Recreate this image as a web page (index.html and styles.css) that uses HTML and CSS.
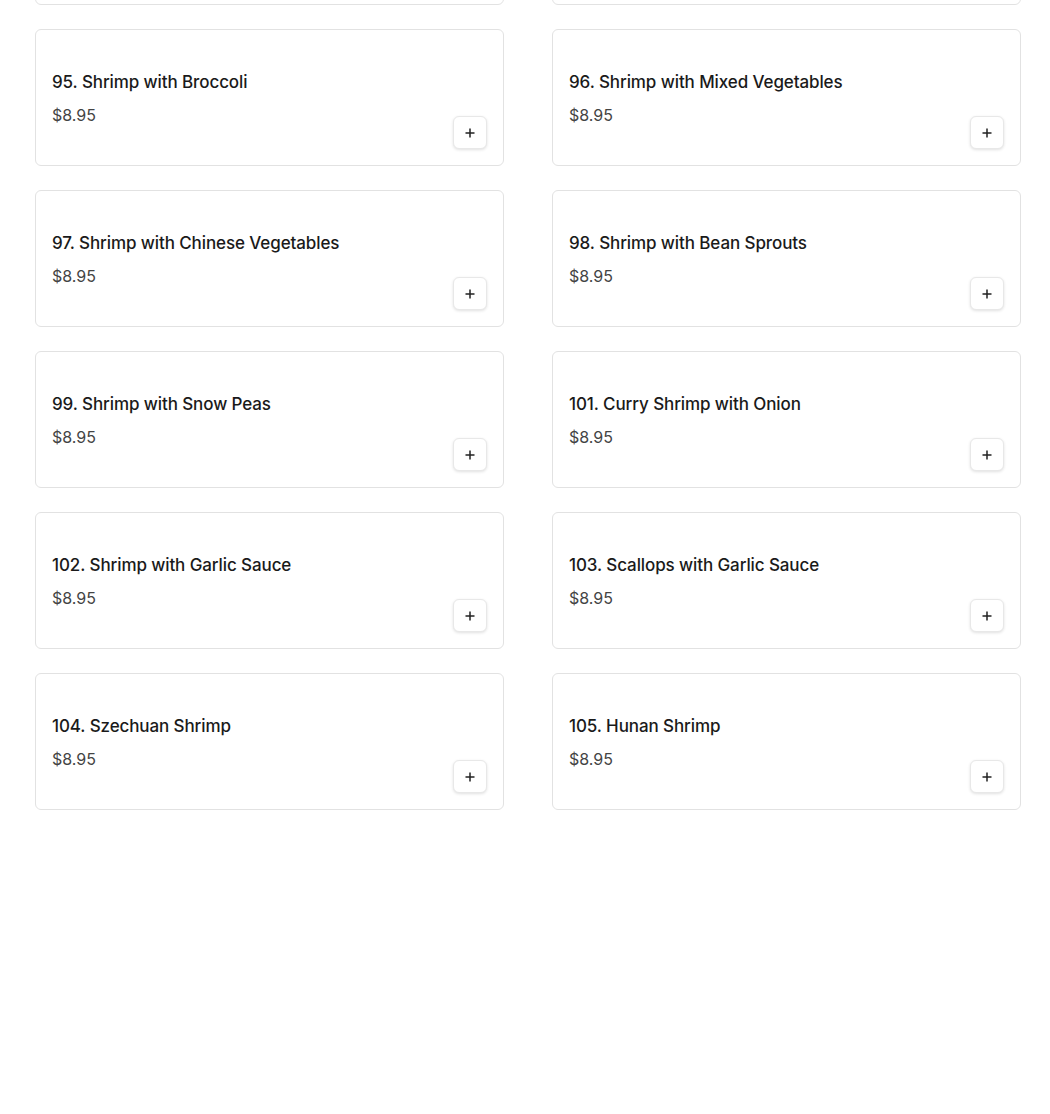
FILE: index.html
```html
<!DOCTYPE html>
<html>

<head>
    <title>Shrimp Menu</title>
    <link rel="stylesheet" href="styles.css">
</head>

<body>
    <div class="menu-grid">
        <!-- previous row, scrolled out of view -->
        <div class="item-card"></div>
        <div class="item-card"></div>

        <div class="item-card">
            <div class="item-info">
                <p class="item-name">95. Shrimp with Broccoli</p>
                <p class="item-price">$8.95</p>
            </div>
            <button class="add-btn" type="button"><svg width="10" height="10" viewBox="0 0 10 10"><path d="M5 0.5v9M0.5 5h9" stroke="#222" stroke-width="1.5" /></svg></button>
        </div>
        <div class="item-card">
            <div class="item-info">
                <p class="item-name">96. Shrimp with Mixed Vegetables</p>
                <p class="item-price">$8.95</p>
            </div>
            <button class="add-btn" type="button"><svg width="10" height="10" viewBox="0 0 10 10"><path d="M5 0.5v9M0.5 5h9" stroke="#222" stroke-width="1.5" /></svg></button>
        </div>
        <div class="item-card">
            <div class="item-info">
                <p class="item-name">97. Shrimp with Chinese Vegetables</p>
                <p class="item-price">$8.95</p>
            </div>
            <button class="add-btn" type="button"><svg width="10" height="10" viewBox="0 0 10 10"><path d="M5 0.5v9M0.5 5h9" stroke="#222" stroke-width="1.5" /></svg></button>
        </div>
        <div class="item-card">
            <div class="item-info">
                <p class="item-name">98. Shrimp with Bean Sprouts</p>
                <p class="item-price">$8.95</p>
            </div>
            <button class="add-btn" type="button"><svg width="10" height="10" viewBox="0 0 10 10"><path d="M5 0.5v9M0.5 5h9" stroke="#222" stroke-width="1.5" /></svg></button>
        </div>
        <div class="item-card">
            <div class="item-info">
                <p class="item-name">99. Shrimp with Snow Peas</p>
                <p class="item-price">$8.95</p>
            </div>
            <button class="add-btn" type="button"><svg width="10" height="10" viewBox="0 0 10 10"><path d="M5 0.5v9M0.5 5h9" stroke="#222" stroke-width="1.5" /></svg></button>
        </div>
        <div class="item-card">
            <div class="item-info">
                <p class="item-name">101. Curry Shrimp with Onion</p>
                <p class="item-price">$8.95</p>
            </div>
            <button class="add-btn" type="button"><svg width="10" height="10" viewBox="0 0 10 10"><path d="M5 0.5v9M0.5 5h9" stroke="#222" stroke-width="1.5" /></svg></button>
        </div>
        <div class="item-card">
            <div class="item-info">
                <p class="item-name">102. Shrimp with Garlic Sauce</p>
                <p class="item-price">$8.95</p>
            </div>
            <button class="add-btn" type="button"><svg width="10" height="10" viewBox="0 0 10 10"><path d="M5 0.5v9M0.5 5h9" stroke="#222" stroke-width="1.5" /></svg></button>
        </div>
        <div class="item-card">
            <div class="item-info">
                <p class="item-name">103. Scallops with Garlic Sauce</p>
                <p class="item-price">$8.95</p>
            </div>
            <button class="add-btn" type="button"><svg width="10" height="10" viewBox="0 0 10 10"><path d="M5 0.5v9M0.5 5h9" stroke="#222" stroke-width="1.5" /></svg></button>
        </div>
        <div class="item-card">
            <div class="item-info">
                <p class="item-name">104. Szechuan Shrimp</p>
                <p class="item-price">$8.95</p>
            </div>
            <button class="add-btn" type="button"><svg width="10" height="10" viewBox="0 0 10 10"><path d="M5 0.5v9M0.5 5h9" stroke="#222" stroke-width="1.5" /></svg></button>
        </div>
        <div class="item-card">
            <div class="item-info">
                <p class="item-name">105. Hunan Shrimp</p>
                <p class="item-price">$8.95</p>
            </div>
            <button class="add-btn" type="button"><svg width="10" height="10" viewBox="0 0 10 10"><path d="M5 0.5v9M0.5 5h9" stroke="#222" stroke-width="1.5" /></svg></button>
        </div>
    </div>
</body>

</html>
```

FILE: styles.css
```css
/* Menu list styles */
body {
    margin: 0;
    background-color: #fff;
    font-family: Inter, "Noto Sans", sans-serif;
    color: #1a1a1a;
}

.menu-grid {
    display: grid;
    grid-template-columns: 469px 469px;
    column-gap: 48px;
    row-gap: 24px;
    padding: 0 29px 0 35px;
    margin-top: -132px;
}

.item-card {
    box-sizing: border-box;
    height: 137px;
    border: 1px solid #e2e2e2;
    border-radius: 6px;
    padding: 16px;
    display: flex;
    justify-content: space-between;
}

.item-info {
    padding-top: 24px;
}

.item-name {
    margin: 0;
    font-size: 17px;
    line-height: 24px;
    font-weight: 500;
    letter-spacing: -0.1px;
    color: #1a1a1a;
}

.item-price {
    margin: 10px 0 0;
    font-size: 16px;
    line-height: 22px;
    color: #444;
}

.add-btn {
    align-self: flex-end;
    width: 34px;
    height: 33px;
    padding: 0;
    background-color: #fff;
    border: 1px solid #e8e8e8;
    border-radius: 6px;
    box-shadow: 0 1px 3px rgba(0, 0, 0, 0.12);
    display: flex;
    align-items: center;
    justify-content: center;
    cursor: pointer;
}
```
